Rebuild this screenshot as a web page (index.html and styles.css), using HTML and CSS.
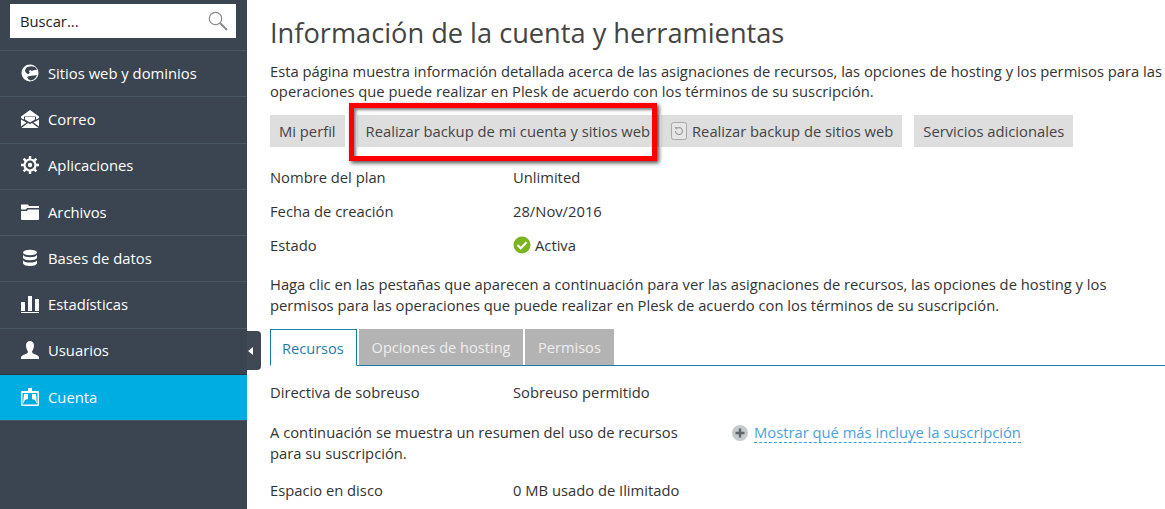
FILE: index.html
```html
<!DOCTYPE html>
<html>
  <head>
    <link rel="stylesheet" href="styles.css">
  </head>

  <body>
    <div class="page">
      <aside class="sidebar">
        <div class="search-wrap">
          <div class="search">
            <span>Buscar...</span>
            <svg width="20" height="20" viewBox="0 0 20 20"><circle cx="7.500" cy="7.500" r="6.200" fill="none" stroke="#8a8a8a" stroke-width="1.200"/><path d="M12 12l7 7" stroke="#8a8a8a" stroke-width="2"/></svg>
          </div>
        </div>
        <nav class="nav">
          <a class="nav-item">
            <svg width="18" height="18" viewBox="0 0 18 18"><circle cx="9" cy="9" r="8.500" fill="#fff"/><path d="M5 4c2-1.500 5-2.500 9-1 1 .8 1.500 2 2 3l-3 0-2 1-2-1-1 1.500 1 1-1.500 1.500C5.500 10 4 8 4 6.500zM6 13c2-1 6-1.500 10-2-.7 2.500-3 5-6 5.500-2-.5-3.500-2-4-3.500z" fill="#3a4551"/></svg>
            Sitios web y dominios
          </a>
          <a class="nav-item">
            <svg width="18" height="18" viewBox="0 0 18 18"><path d="M0 6.500L9 0l9 6.500V8l-3 1.500V6.500H3v3L0 8z" fill="#fff"/><path d="M0 9.500l5.500 3L0 16.500zM18 9.500l-5.500 3 5.500 4zM.5 18l6.500-5 2 1.200 2-1.200 6.500 5zM4 7h10v2.500l-5 3-5-3z" fill="#fff"/></svg>
            Correo
          </a>
          <a class="nav-item">
            <svg width="18" height="18" viewBox="0 0 18 18"><circle cx="9" cy="9" r="5.500" fill="none" stroke="#fff" stroke-width="2.200"/><circle cx="9" cy="9" r="2.200" fill="#fff"/><path d="M9 0v3.500M9 14.500V18M0 9h3.500M14.500 9H18M2.600 2.600l2.500 2.500M12.900 12.900l2.500 2.500M15.400 2.600l-2.500 2.500M5.100 12.900l-2.500 2.500" stroke="#fff" stroke-width="2.400"/></svg>
            Aplicaciones
          </a>
          <a class="nav-item">
            <svg width="18" height="18" viewBox="0 0 18 18"><path d="M0 1.500h7l1 1.500h10v2H6L5 6.500H0z" fill="#fff"/><path d="M0 8h6l1-1.500h11V16a1 1 0 0 1-1 1H1a1 1 0 0 1-1-1z" fill="#fff"/></svg>
            Archivos
          </a>
          <a class="nav-item">
            <svg width="18" height="18" viewBox="0 0 18 18"><ellipse cx="9" cy="3.500" rx="7" ry="2.800" fill="#fff"/><path d="M2 5.800c1 1.800 3.500 2.400 7 2.400s6-.6 7-2.400V9c-1 1.600-3.500 2.200-7 2.200S3 10.600 2 9z" fill="#fff"/><path d="M2 11.200c1 1.800 3.500 2.400 7 2.400s6-.6 7-2.400v3.300c-.8 1.700-3.500 2.500-7 2.500s-6.200-.8-7-2.500z" fill="#fff"/></svg>
            Bases de datos
          </a>
          <a class="nav-item">
            <svg width="18" height="18" viewBox="0 0 18 18"><path d="M0 7h4v9H0zM7 1h4v15H7zM14 4h4v12h-4zM0 17h18v1H0z" fill="#fff"/></svg>
            Estadísticas
          </a>
          <a class="nav-item">
            <svg width="18" height="18" viewBox="0 0 18 18"><path d="M9 0c2.500 0 4 2 4 4.500S11.500 10 11 10.500c0 1.500 1 2 3 2.800 2.500.9 4 1.700 4 3.200V18H0v-1.500c0-1.500 1.500-2.300 4-3.200 2-.8 3-1.300 3-2.800C6.500 10 5 7 5 4.500S6.500 0 9 0z" fill="#fff"/></svg>
            Usuarios
          </a>
          <a class="nav-item active">
            <svg width="18" height="18" viewBox="0 0 18 18"><path d="M1 3h16a1 1 0 0 1 1 1v13a1 1 0 0 1-1 1H1a1 1 0 0 1-1-1V4a1 1 0 0 1 1-1z" fill="#fff"/><rect x="1.500" y="5" width="15" height="11.500" fill="#00ade3"/><path d="M7 0h4v4H7z" fill="#fff"/><path d="M2 16l2-4 3-1V6H3zM16 16l-2-4-3-1V6h4z" fill="#fff"/></svg>
            Cuenta
          </a>
        </nav>
        <div class="collapse"><span class="collapse-arrow"></span></div>
      </aside>

      <main class="main">
        <h1>Información de la cuenta y herramientas</h1>
        <p class="intro">Esta página muestra información detallada acerca de las asignaciones de recursos, las opciones de hosting y los permisos para las operaciones que puede realizar en Plesk de acuerdo con los términos de su suscripción.</p>

        <div class="toolbar">
          <button class="tool">Mi perfil</button>
          <button class="tool">Realizar backup de mi cuenta y sitios web</button>
          <button class="tool tool-tight">
            <svg width="16" height="18" viewBox="0 0 16 18"><rect x=".5" y=".5" width="15" height="17" rx="2" fill="#e6e6e6" stroke="#a8a8a8"/><path d="M4.500 9a3.500 3.500 0 1 0 1.200-2.600" fill="none" stroke="#a0a0a0" stroke-width="1.200"/><path d="M3.500 4.800l3.500.5-2 2.500z" fill="#a0a0a0"/></svg>
            Realizar backup de sitios web
          </button>
          <button class="tool">Servicios adicionales</button>
        </div>
        <div class="highlight"></div>

        <div class="info">
          <div class="info-row"><span class="info-label">Nombre del plan</span><span>Unlimited</span></div>
          <div class="info-row"><span class="info-label">Fecha de creación</span><span>28/Nov/2016</span></div>
          <div class="info-row">
            <span class="info-label">Estado</span>
            <span class="status">
              <svg width="18" height="18" viewBox="0 0 18 18"><circle cx="9" cy="9" r="8.500" fill="#7ab51d"/><path d="M4.500 9l3.200 3.200 5.800-6" fill="none" stroke="#fff" stroke-width="2.200"/></svg>
              Activa
            </span>
          </div>
        </div>

        <p class="help">Haga clic en las pestañas que aparecen a continuación para ver las asignaciones de recursos, las opciones de hosting y los permisos para las operaciones que puede realizar en Plesk de acuerdo con los términos de su suscripción.</p>

        <div class="tabs">
          <a class="tab current">Recursos</a>
          <a class="tab">Opciones de hosting</a>
          <a class="tab">Permisos</a>
        </div>

        <div class="info-row overuse"><span class="info-label">Directiva de sobreuso</span><span>Sobreuso permitido</span></div>

        <div class="summary">
          <p class="summary-text">A continuación se muestra un resumen del uso de recursos para su suscripción.</p>
          <div class="more">
            <svg width="16" height="16" viewBox="0 0 16 16"><circle cx="8" cy="8" r="8" fill="#c5cacd"/><path d="M8 3.500v9M3.500 8h9" stroke="#5f6468" stroke-width="2.400"/></svg>
            <a class="more-link">Mostrar qué más incluye la suscripción</a>
          </div>
        </div>

        <div class="info-row disk"><span class="info-label">Espacio en disco</span><span>0 MB usado de Ilimitado</span></div>
      </main>
    </div>
  </body>
</html>
```

FILE: styles.css
```css
html,
body {
  margin: 0;
  height: 100%;
  overflow: hidden;
}

body {
  font-family: "Open Sans", sans-serif;
  font-size: 14.75px;
  color: #333;
  background-color: #fff;
}

.page {
  display: flex;
  height: 509px;
}

.sidebar {
  position: relative;
  flex: 0 0 247px;
  background-color: #3a4551;
}

.search-wrap {
  padding: 4px 11px 12px 10px;
}

.search {
  display: flex;
  align-items: center;
  justify-content: space-between;
  height: 34px;
  padding: 0 8px 0 10px;
  background-color: #fff;
  color: #222;
}

.nav-item {
  display: flex;
  align-items: center;
  gap: 9px;
  height: 43.75px;
  padding: 0 0 1.5px 21px;
  border-top: 1px solid #4a5866;
  font-size: 14.8px;
  color: #fff;
}

.nav-item svg {
  flex: none;
}

.nav-item.active {
  background-color: #00ade3;
  border-top-color: #2b3640;
}

.nav {
  border-bottom: 1px solid #4a5866;
}

.collapse {
  position: absolute;
  left: 247px;
  top: 331px;
  display: flex;
  align-items: center;
  width: 14px;
  height: 39px;
  background-color: #3f4853;
  border-radius: 0 4px 4px 0;
}

.collapse-arrow {
  margin-left: 1px;
  border-top: 4px solid transparent;
  border-bottom: 4px solid transparent;
  border-right: 5px solid #fff;
}

.main {
  position: relative;
  flex: 1;
  min-width: 0;
  padding: 0 0 0 23px;
}

h1 {
  margin: 15px 0 10px;
  font-size: 27.2px;
  line-height: 36px;
  font-weight: 400;
  color: #444;
}

.intro,
.help {
  margin: 0;
  line-height: 21px;
  color: #333;
}

.intro {
  line-height: 20px;
}

.toolbar {
  display: flex;
  gap: 12px;
  margin-top: 14px;
}

.tool {
  display: flex;
  align-items: center;
  gap: 6px;
  height: 32px;
  padding: 0 9px;
  border: none;
  background-color: #dedede;
  font-family: inherit;
  font-size: 14.75px;
  color: #444;
}

.tool-tight {
  margin-left: -10px;
  padding-left: 10px;
  gap: 5px;
}

.highlight {
  position: absolute;
  left: 102px;
  top: 103px;
  width: 298px;
  height: 48px;
  border: 5px solid #ff0000;
  box-shadow: 2px 2px 4px rgba(0, 0, 0, 0.7), inset 2px 2px 3px rgba(0, 0, 0, 0.5);
}

.info {
  margin-top: 13px;
}

.info-row {
  display: flex;
  align-items: center;
  height: 34px;
}

.info-label {
  flex: 0 0 243px;
}

.status {
  display: flex;
  align-items: center;
  gap: 4px;
}

.help {
  margin-top: 12px;
}

.tabs {
  display: flex;
  gap: 2px;
  margin-top: 13px;
  height: 36px;
  border-bottom: 1px solid #1a7fa8;
}

.tab {
  display: flex;
  align-items: center;
  padding: 0 12.75px;
  background-color: #b3b3b3;
  color: #eee;
  height: 36px;
  font-size: 14.6px;
}

.tab.current {
  box-sizing: border-box;
  height: 37px;
  padding: 0 12px 0 11px;
  background-color: #fff;
  color: #1f7ea8;
  border: 1px solid #1a7fa8;
  border-bottom: 1px solid #fff;
}

.overuse {
  margin-top: 9px;
}

.summary {
  display: flex;
  align-items: flex-start;
  margin-top: 13px;
}

.summary-text {
  flex: 0 0 420px;
  margin: 0;
  line-height: 21px;
}

.more {
  display: flex;
  align-items: center;
  gap: 6px;
  margin-left: 42px;
}

.more-link {
  color: #4a9fe0;
  border-bottom: 1px dashed #2ea0e6;
}

.disk {
  margin-top: 9px;
}
```
